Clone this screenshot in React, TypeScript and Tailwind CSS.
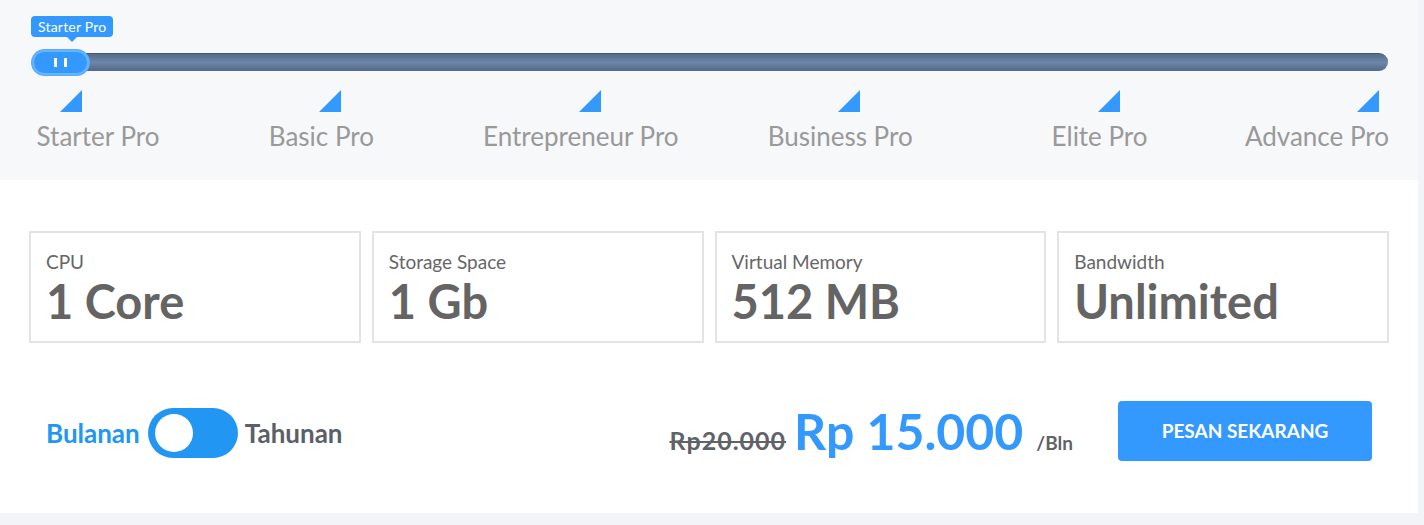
import React, { useState } from 'react';

const plans = ['Starter Pro', 'Basic Pro', 'Entrepreneur Pro', 'Business Pro', 'Elite Pro', 'Advance Pro'];

const specs = [
  { label: 'CPU', value: '1 Core' },
  { label: 'Storage Space', value: '1 Gb' },
  { label: 'Virtual Memory', value: '512 MB' },
  { label: 'Bandwidth', value: 'Unlimited' },
];

function Corner() {
  return (
    <svg width="22" height="22" viewBox="0 0 22 22" className="translate-x-[9px]">
      <polygon points="22,0 22,22 0,22" fill="#3399ff" />
    </svg>
  );
}

export default function App() {
  const [yearly, setYearly] = useState(false);

  return (
    <div className="min-h-screen bg-[#f3f4f8] font-['Lato',sans-serif]">
      <div className="w-[1418px]">
        {/* Plan slider */}
        <div className="h-[180px] bg-[#f7f8fa] pt-[53px]">
          <div className="relative ml-[33px] h-[18px] w-[1355px] rounded-full border-t border-[#475872] bg-gradient-to-b from-[#566b8a] via-[#6d87a9] to-[#53678a]">
            {/* Tooltip */}
            <div className="absolute -left-[2px] -top-[38px] flex flex-col items-center">
              <div className="rounded-[4px] bg-[#3399ff] px-[7px] py-[2px] text-[14px] leading-[17px] tracking-[0.2px] text-white">
                Starter Pro
              </div>
              <div className="h-0 w-0 border-x-[5px] border-t-[5px] border-x-transparent border-t-[#3399ff]" />
            </div>
            {/* Thumb */}
            <div className="absolute -left-[2px] -top-[5px] flex h-[27px] w-[59px] items-center justify-center rounded-full bg-[#5aabff]">
              <div className="flex h-[21px] w-[53px] items-center justify-center gap-[7px] rounded-full bg-[#3399ff] ring-2 ring-[#66b3ff]">
                <span className="h-[9px] w-[3px] bg-white" />
                <span className="h-[9px] w-[3px] bg-white" />
              </div>
            </div>
          </div>

          {/* Ticks */}
          <div className="ml-[62px] mt-[19px] flex w-[1297px] justify-between">
            {plans.map((p, i) => (
              <div key={p} className="flex w-0 flex-col items-center">
                <Corner />
                <span
                  className={
                    'mt-[7px] whitespace-nowrap text-[26px] leading-[34px] text-[#999999] ' +
                    (i === 0 ? 'translate-x-[36px]' : i === plans.length - 1 ? '-translate-x-[42px]' : '')
                  }
                >
                  {p}
                </span>
              </div>
            ))}
          </div>
        </div>

        {/* Details */}
        <div className="h-[333px] bg-white px-[29px] pt-[51px]">
          <div className="grid grid-cols-4 gap-[11px]">
            {specs.map((s) => (
              <div key={s.label} className="h-[112px] border-2 border-[#e3e3e3] pl-[15px] pt-[17px]">
                <p className="text-[19px] leading-[24px] text-[#666666]">{s.label}</p>
                <p className="mt-[1px] text-[47px] font-bold leading-[52px] text-[#646464]">{s.value}</p>
              </div>
            ))}
          </div>

          <div className="mt-[58px] flex items-center pl-[17px] pr-[17px]">
            <div className="mt-[4px] flex items-center">
              <span className={'text-[26px] font-bold ' + (yearly ? 'text-[#5a5f69]' : 'text-[#2196f3]')}>Bulanan</span>
              <button
                onClick={() => setYearly(!yearly)}
                className={'ml-[8px] mr-[7px] flex h-[50px] w-[90px] items-center rounded-full bg-[#2196f3] px-[7px] ' + (yearly ? 'justify-end' : 'justify-start')}
                aria-label="Toggle billing period"
              >
                <span className="h-[38px] w-[38px] rounded-full bg-white" />
              </button>
              <span className={'text-[26px] font-bold ' + (yearly ? 'text-[#2196f3]' : 'text-[#5a5f69]')}>Tahunan</span>
            </div>

            <div className="ml-auto flex items-baseline">
              <span className="text-[25px] font-bold tracking-[1px] text-[#5f6368] line-through decoration-2">Rp20.000</span>
              <span className="ml-[8px] text-[50px] font-bold leading-[60px] text-[#3399ff]">Rp 15.000</span>
              <span className="ml-[13px] text-[19px] font-bold text-[#5f6368]">/Bln</span>
            </div>

            <button className="ml-[45px] h-[60px] w-[254px] rounded-[4px] bg-[#3399ff] text-[19px] font-bold uppercase text-white">
              Pesan Sekarang
            </button>
          </div>
        </div>
      </div>
    </div>
  );
}
